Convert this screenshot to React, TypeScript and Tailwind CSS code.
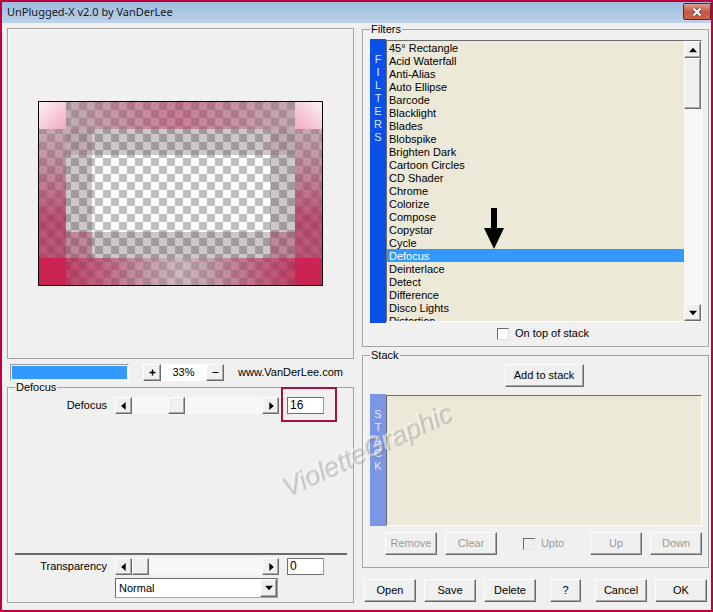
import { useState } from 'react'
import type { ReactNode } from 'react'
import clsx from 'clsx'

const FILTERS = [
  '45° Rectangle',
  'Acid Waterfall',
  'Anti-Alias',
  'Auto Ellipse',
  'Barcode',
  'Blacklight',
  'Blades',
  'Blobspike',
  'Brighten Dark',
  'Cartoon Circles',
  'CD Shader',
  'Chrome',
  'Colorize',
  'Compose',
  'Copystar',
  'Cycle',
  'Defocus',
  'Deinterlace',
  'Detect',
  'Difference',
  'Disco Lights',
  'Distortion',
]

const BEVEL =
  'border border-t-white border-l-white border-r-[#6b6b6b] border-b-[#6b6b6b] bg-[#f0f0f0] shadow-[inset_-1px_-1px_0_#a8a8a8]'

function Button({ children, className, disabled }: { children: ReactNode; className?: string; disabled?: boolean }) {
  return (
    <button
      type="button"
      disabled={disabled}
      className={clsx(BEVEL, 'h-[23px] text-center', disabled ? 'text-[#9a9a9a]' : 'text-black', className ?? 'w-[52px]')}
    >
      {children}
    </button>
  )
}

const ARROWS = {
  left: 'M5 0v7L1 3.5z',
  right: 'M2 0v7l4-3.500z',
  up: 'M0 5.500h7L3.500 1.500z',
  down: 'M0 1.500h7L3.500 5.500z',
}

function ArrowButton({ direction, label }: { direction: keyof typeof ARROWS; label: string }) {
  return (
    <button type="button" aria-label={label} className={clsx(BEVEL, 'flex size-[17px] shrink-0 items-center justify-center')}>
      <svg viewBox="0 0 7 7" className="size-2">
        <path d={ARROWS[direction]} />
      </svg>
    </button>
  )
}

function Group({ title, children, className }: { title: string; children: ReactNode; className?: string }) {
  return (
    <fieldset className={clsx('min-w-0 border border-[#a3a3a3] pr-1.5 pl-[7px] shadow-[inset_1px_0_0_#fafafa]', className)}>
      <legend className="h-3 px-px leading-3">{title}</legend>
      {children}
    </fieldset>
  )
}

function SideLabel({ text, className }: { text: string; className: string }) {
  return (
    <div className={clsx('flex w-4 shrink-0 flex-col items-center', className)} aria-label={text}>
      {text.split('').map((letter, i) => (
        <span key={i} className="leading-[13px]">{letter}</span>
      ))}
    </div>
  )
}

function SliderRow({ id, label, max, initial, marked }: { id: string; label: string; max: number; initial: number; marked?: boolean }) {
  const [value, setValue] = useState(initial)

  return (
    <div className="flex h-[17px] items-center">
      <label htmlFor={id} className="mr-2 w-[92px] text-right">{label}</label>
      <ArrowButton direction="left" label={`Decrease ${label}`} />
      <input
        id={id}
        type="range"
        min={0}
        max={max}
        value={value}
        onChange={e => setValue(Number(e.target.value))}
        className="h-[17px] w-[130px] appearance-none bg-[#f7f7f7] [&::-webkit-slider-thumb]:h-[17px] [&::-webkit-slider-thumb]:w-[17px] [&::-webkit-slider-thumb]:appearance-none [&::-webkit-slider-thumb]:border [&::-webkit-slider-thumb]:border-t-white [&::-webkit-slider-thumb]:border-l-white [&::-webkit-slider-thumb]:border-r-[#6b6b6b] [&::-webkit-slider-thumb]:border-b-[#6b6b6b] [&::-webkit-slider-thumb]:bg-[#f0f0f0] [&::-webkit-slider-thumb]:shadow-[inset_-1px_-1px_0_#a8a8a8]"
      />
      <ArrowButton direction="right" label={`Increase ${label}`} />
      <div className="relative ml-2">
        <input
          type="text"
          aria-label={`${label} value`}
          value={value}
          onChange={e => setValue(Number(e.target.value) || 0)}
          className="block h-[17px] w-[37px] border border-[#707070] border-r-[#9a9a9a] bg-white pb-0.5 pl-0.5 text-[12px] leading-3"
        />
        {marked && <div className="pointer-events-none absolute -top-2.5 -left-1.5 h-[35px] w-[56px] border-2 border-[#a8103f]" />}
      </div>
    </div>
  )
}

// Transparent frame artwork over a checkerboard
function Preview() {
  return (
    <svg viewBox="0 0 285 185" className="h-[185px] w-[285px]" role="img" aria-label="Filter preview">
      <defs>
        <pattern id="checker" width="16" height="16" patternUnits="userSpaceOnUse" x="1" y="1">
          <path d="M0 0h16v16H0z" fill="#fff" />
          <path d="M8 0h8v8H8zM0 8h8v8H0z" fill="#bfbfbf" />
        </pattern>
        <linearGradient id="top">
          <stop offset="0" stopColor="#96707e" stopOpacity="0.58" />
          <stop offset="0.25" stopColor="#a04c6a" stopOpacity="0.6" />
          <stop offset="0.5" stopColor="#aa3c62" stopOpacity="0.66" />
          <stop offset="0.75" stopColor="#a04c6a" stopOpacity="0.6" />
          <stop offset="1" stopColor="#96707e" stopOpacity="0.58" />
        </linearGradient>
        <linearGradient id="bottom">
          <stop offset="0" stopColor="#b01a48" stopOpacity="0.82" />
          <stop offset="0.2" stopColor="#a63a5e" stopOpacity="0.72" />
          <stop offset="0.5" stopColor="#a08690" stopOpacity="0.56" />
          <stop offset="0.8" stopColor="#a63a5e" stopOpacity="0.72" />
          <stop offset="1" stopColor="#b01a48" stopOpacity="0.82" />
        </linearGradient>
        <linearGradient id="side" x2="0" y2="1">
          <stop offset="0" stopColor="#9c6e7f" stopOpacity="0.58" />
          <stop offset="0.35" stopColor="#a04868" stopOpacity="0.65" />
          <stop offset="0.7" stopColor="#a82850" stopOpacity="0.8" />
          <stop offset="1" stopColor="#a83056" stopOpacity="0.8" />
        </linearGradient>
        <linearGradient id="cornerLeft" x2="1" y2="1">
          <stop offset="0" stopColor="#fbf3f5" />
          <stop offset="1" stopColor="#f2a9bf" />
        </linearGradient>
        <linearGradient id="cornerRight" x1="1" x2="0" y2="1">
          <stop offset="0" stopColor="#fbf3f5" />
          <stop offset="1" stopColor="#f2a9bf" />
        </linearGradient>
      </defs>
      <path d="M0 0h285v185H0z" fill="url(#checker)" />
      <path d="M28 28h229v129H28zM54 54v77h178V54z" fillRule="evenodd" fill="#5c4650" fillOpacity="0.3" />
      <path d="M28 28h26v26H28zM232 28h25v26h-25z" fill="#8c4a60" fillOpacity="0.22" />
      <path d="M28 131h26v26H28zM232 131h25v26h-25z" fill="#a02850" fillOpacity="0.4" />
      <path d="M28 1h229v27H28z" fill="url(#top)" />
      <path d="M28 157h229v27H28z" fill="url(#bottom)" />
      <path d="M1 28h27v129H1zM257 28h27v129h-27z" fill="url(#side)" />
      <path d="M1 1h27v27H1z" fill="url(#cornerLeft)" />
      <path d="M257 1h27v27h-27z" fill="url(#cornerRight)" />
      <path d="M1 157h27v27H1zM257 157h27v27h-27z" fill="#cb2452" />
      <path d="M0.500 0.500h284v184H0.500z" fill="none" stroke="#000" />
    </svg>
  )
}

export default function App() {
  const [selected, setSelected] = useState('Defocus')

  return (
    <div className="relative flex min-h-screen flex-col overflow-hidden border-2 border-[#c0003c] bg-[#f0f0f0] font-['Liberation_Sans',Arial,sans-serif] text-[11px] leading-[13px] text-black">
      <header className="flex h-[21px] items-start justify-between bg-linear-to-b from-[#9dbcdd] to-[#bdd2e9] pl-[5px]">
        <h1 className="font-['Noto_Sans',sans-serif] text-[11px] leading-5 text-[#101828]">UnPlugged-X v2.0 by VanDerLee</h1>
        <button
          type="button"
          aria-label="Close"
          className="mt-px flex h-[17px] w-7 items-center justify-center rounded-l-xs border border-[#5b2430] bg-linear-to-b from-[#e0a090] via-[#c65a48] to-[#d0604a]"
        >
          <svg viewBox="0 0 12 10" className="h-2.5 w-3">
            <path d="M2.500 1.500l7 7M9.500 1.500l-7 7" stroke="#50414a" strokeWidth="3.600" />
            <path d="M2.500 1.500l7 7M9.500 1.500l-7 7" stroke="#fff" strokeWidth="2.200" />
          </svg>
        </button>
      </header>

      <main className="grid flex-1 grid-cols-2 gap-2 pr-0.5 pb-[7px] pl-[5px]">
        {/* Preview and filter settings */}
        <section className="flex min-w-0 flex-col pt-[5px]">
          <div className="flex flex-1 items-center justify-center border border-[#a3a3a3] shadow-[inset_1px_1px_0_#fafafa]">
            <Preview />
          </div>

          <div className="mt-1 flex h-[18px] items-center pl-[3px]">
            <div
              role="progressbar"
              aria-label="Render progress"
              aria-valuenow={100}
              className="mr-3.5 h-[17px] w-[119px] border border-t-[#9a9a9a] border-l-[#9a9a9a] border-r-white border-b-white p-px"
            >
              <div className="h-full bg-[#3399ff]" />
            </div>
            <button type="button" aria-label="Zoom in" className={clsx(BEVEL, 'flex h-[17px] w-[18px] items-center justify-center')}>
              <svg viewBox="0 0 7 7" className="size-[7px]">
                <path d="M3.500 0.500v6M0.500 3.500h6" stroke="#000" strokeWidth="1.400" />
              </svg>
            </button>
            <output className="h-[17px] w-[45px] bg-white text-center leading-[17px]">33%</output>
            <button type="button" aria-label="Zoom out" className={clsx(BEVEL, 'flex h-[17px] w-[18px] items-center justify-center')}>
              <svg viewBox="0 0 7 7" className="size-[7px]">
                <path d="M0.500 3.500h6" stroke="#000" />
              </svg>
            </button>
            <a href="#site" className="ml-3.5">www.VanDerLee.com</a>
          </div>

          <Group title="Defocus" className="pt-1 pb-1">
            <div className="flex min-h-[201px] flex-col">
              <SliderRow id="defocus" label="Defocus" max={50} initial={16} marked />
              <hr className="mt-auto mb-[3px] border-t-2 border-[#6b6b6b]" />
              <SliderRow id="transparency" label="Transparency" max={100} initial={0} />
              <div className="relative mt-[3px] ml-[100px] w-[163px]">
                <select
                  aria-label="Blend mode"
                  className="block h-5 w-full appearance-none border border-t-[#6b6b6b] border-l-[#6b6b6b] border-r-[#a3a3a3] border-b-[#a3a3a3] bg-white pl-[3px]"
                >
                  <option>Normal</option>
                </select>
                <span className={clsx(BEVEL, 'pointer-events-none absolute top-px right-px flex h-[18px] w-[17px] items-center justify-center')}>
                  <svg viewBox="0 0 7 7" className="size-2">
                    <path d={ARROWS.down} />
                  </svg>
                </span>
              </div>
            </div>
          </Group>
        </section>

        {/* Filter list and stack */}
        <section className="min-w-0">
          <Group title="Filters" className="pt-1 pb-1.5">
            <div className="flex h-[284px]">
              <SideLabel text="FILTERS" className="bg-[#0a50e6] pt-3.5 text-[#d5e6ff]" />
              <div className="relative mt-px flex h-[282px] min-w-0 flex-1 border border-t-[#6b6b6b] border-l-[#6b6b6b] border-r-white border-b-white bg-[#ece9d8]">
                <ul role="listbox" aria-label="Filters" className="flex-1 overflow-hidden">
                  {FILTERS.map(name => (
                    <li
                      key={name}
                      role="option"
                      aria-selected={name === selected}
                      onClick={() => setSelected(name)}
                      className={clsx('h-[13px] pl-0.5 leading-[14px]', name === selected && 'bg-[#3399ff] text-white')}
                    >
                      {name}
                    </li>
                  ))}
                </ul>
                <div className="flex w-[17px] flex-col bg-[#f7f7f7]">
                  <ArrowButton direction="up" label="Scroll up" />
                  <div className={clsx(BEVEL, 'h-[51px]')} />
                  <div className="flex-1" />
                  <ArrowButton direction="down" label="Scroll down" />
                </div>
                <svg viewBox="0 0 20 41" className="pointer-events-none absolute top-[167px] left-[97px] h-[41px] w-5">
                  <path d="M7 0h6v20h7L10 41 0 20h7z" />
                </svg>
              </div>
            </div>
            <label className="mt-1 flex h-[13px] items-center justify-center gap-1.5 pl-3.5">
              <input type="checkbox" className="size-3 appearance-none border border-t-[#6b6b6b] border-l-[#6b6b6b] border-r-[#dcdcdc] border-b-[#dcdcdc] bg-white checked:bg-[#3399ff]" />
              On top of stack
            </label>
          </Group>

          <Group title="Stack" className="mt-0.5 pt-[3px] pb-3">
            <div className="flex justify-center pl-4">
              <Button className="w-[79px]">Add to stack</Button>
            </div>
            <div className="mt-[7px] flex h-[132px]">
              <SideLabel text="STACK" className="bg-[#7a96e4] pt-3.5 text-[#e2ebff]" />
              <div className="mt-px flex-1 border border-t-[#6b6b6b] border-l-[#6b6b6b] border-r-white border-b-white bg-[#ece9d8]" />
            </div>
            <div className="mt-1.5 flex items-center justify-between pl-[15px]">
              <div className="flex gap-2">
                <Button disabled>Remove</Button>
                <Button disabled>Clear</Button>
              </div>
              <label className="flex items-center gap-1.5 text-[#9a9a9a]">
                <input type="checkbox" disabled className="size-3 appearance-none border border-t-[#6b6b6b] border-l-[#6b6b6b] border-r-[#e4e4e4] border-b-[#e4e4e4] bg-[#f0f0f0]" />
                Upto
              </label>
              <div className="flex gap-2">
                <Button disabled>Up</Button>
                <Button disabled>Down</Button>
              </div>
            </div>
          </Group>

          <div className="mt-[11px] flex justify-between px-0.5">
            <div className="flex gap-2">
              <Button>Open</Button>
              <Button>Save</Button>
              <Button>Delete</Button>
            </div>
            <Button className="w-[31px]">?</Button>
            <div className="flex gap-2">
              <Button>Cancel</Button>
              <Button>OK</Button>
            </div>
          </div>
        </section>
      </main>

      {/* Embossed watermark */}
      <div className="pointer-events-none absolute top-[434px] left-[272px] origin-center -rotate-25 text-[27px] leading-7 text-[#e4e2dc]/40 italic [text-shadow:1px_1px_1px_rgba(110,110,110,0.4),-1px_-1px_0_rgba(255,255,255,0.6)]">
        VioletteGraphic
      </div>
    </div>
  )
}
